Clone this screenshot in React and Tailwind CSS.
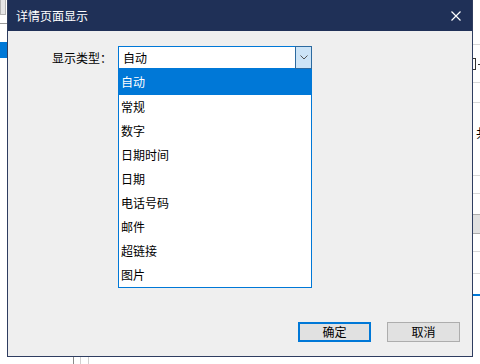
import React from "react";

const items = ["自动", "常规", "数字", "日期时间", "日期", "电话号码", "邮件", "超链接", "图片"];

function Line({ className }) {
  return <div className={"h-px shrink-0 bg-[#d8d8d8] " + className} />;
}

export default function App() {
  const font = { fontFamily: '"Noto Sans CJK SC", "Noto Sans", sans-serif' };
  return (
    <div className="w-[480px] h-[364px] bg-white overflow-hidden text-[12px] text-black flex flex-col" style={font}>
      <div className="h-[357px] flex shrink-0">
        {/* left page fragment */}
        <div className="w-[7px] flex flex-col shrink-0">
          <div className="h-[15px] w-[6px] bg-[#e6e6e6] border border-t-0 border-[#b5b5b5]" />
          <div className="mt-[8px] h-px bg-[#9a9a9a]" />
          <div className="mt-[18px] h-[16px] bg-[#0078d7]" />
        </div>

        {/* dialog */}
        <div className="w-[466px] h-[357px] shrink-0 border border-t-0 border-[#2e3d60] bg-[#efefef] flex flex-col">
          <div className="h-[31px] bg-[#1f3057] flex items-center justify-between pl-[8px] pr-[10px] text-white">
            <span className="text-[12px] leading-none">详情页面显示</span>
            <svg width="10" height="10" viewBox="0 0 10 10" className="mr-[1px]">
              <path d="M0.5 0.5 L9.5 9.5 M9.5 0.5 L0.5 9.5" stroke="white" strokeWidth="1.2" />
            </svg>
          </div>
          <div className="relative flex-1 flex flex-col pt-[15px]">
            <div className="flex items-center">
              <div className="w-[104px] text-right leading-none">显示类型：</div>
              <div className="ml-[6px] w-[194px] h-[23px] border border-[#0078d7] bg-white flex items-center">
                <span className="flex-1 pl-[4px] leading-none">自动</span>
                <div className="w-[17px] h-[23px] -mr-px border border-[#2c6aa0] bg-[#cce4f7] flex items-center justify-center">
                  <svg width="8" height="5" viewBox="0 0 8 5">
                    <path d="M0.5 0.5 L4 4 L7.5 0.5" stroke="#555" strokeWidth="1" fill="none" />
                  </svg>
                </div>
              </div>
            </div>
            <div className="flex-1" />
            <div className="flex justify-end gap-[16px] pr-[12px] pb-[14px]">
              <button className="w-[73px] h-[20px] border-2 border-[#0078d7] bg-[#e1e1e1] flex items-center justify-center leading-none text-[12px]">确定</button>
              <button className="w-[73px] h-[20px] border border-[#adadad] bg-[#e1e1e1] flex items-center justify-center leading-none text-[12px]">取消</button>
            </div>

            {/* dropdown list overlay */}
            <div className="absolute left-[110px] top-[38px] w-[194px] h-[219px] border border-[#0078d7] border-t-0 bg-white flex flex-col">
              {items.map((t, i) => (
                <div
                  key={t}
                  className={
                    i === 0
                      ? "h-[26px] shrink-0 flex items-center pl-[2px] bg-[#0078d7] text-white leading-none"
                      : "h-[24px] shrink-0 flex items-center pl-[2px] leading-none"
                  }
                >
                  {t}
                </div>
              ))}
            </div>
          </div>
        </div>

        {/* right page fragment */}
        <div className="flex-1 flex flex-col overflow-hidden">
          <Line className="mt-[44px]" />
          <div className="mt-[13px] flex items-center h-[12px]">
            <div className="w-[4px] h-[12px] border border-l-0 border-[#333]" />
            <div className="ml-[2px] w-[2px] h-px bg-[#333]" />
          </div>
          <Line className="mt-[12px]" />
          <Line className="mt-[19px]" />
          <div className="mt-[24px] pl-[3px] h-[14px] leading-none whitespace-nowrap">共</div>
          <Line className="mt-[34px]" />
          <Line className="mt-[17px]" />
          <div className="mt-[20px] h-[20px] shrink-0 bg-[#e1e1e1] border-y border-[#adadad]" />
          <Line className="mt-[17px]" />
          <Line className="mt-[21px]" />
          <div className="mt-[20px] h-[2px] shrink-0 bg-[#0078d7]" />
        </div>
      </div>

      {/* bottom page fragment */}
      <div className="flex-1 flex pl-[73px] gap-[6px]">
        <div className="w-px bg-[#8a8a8a]" />
        <div className="w-px bg-[#d0d0d0]" />
        <div className="ml-[1px] w-px bg-[#d0d0d0]" />
      </div>
    </div>
  );
}
